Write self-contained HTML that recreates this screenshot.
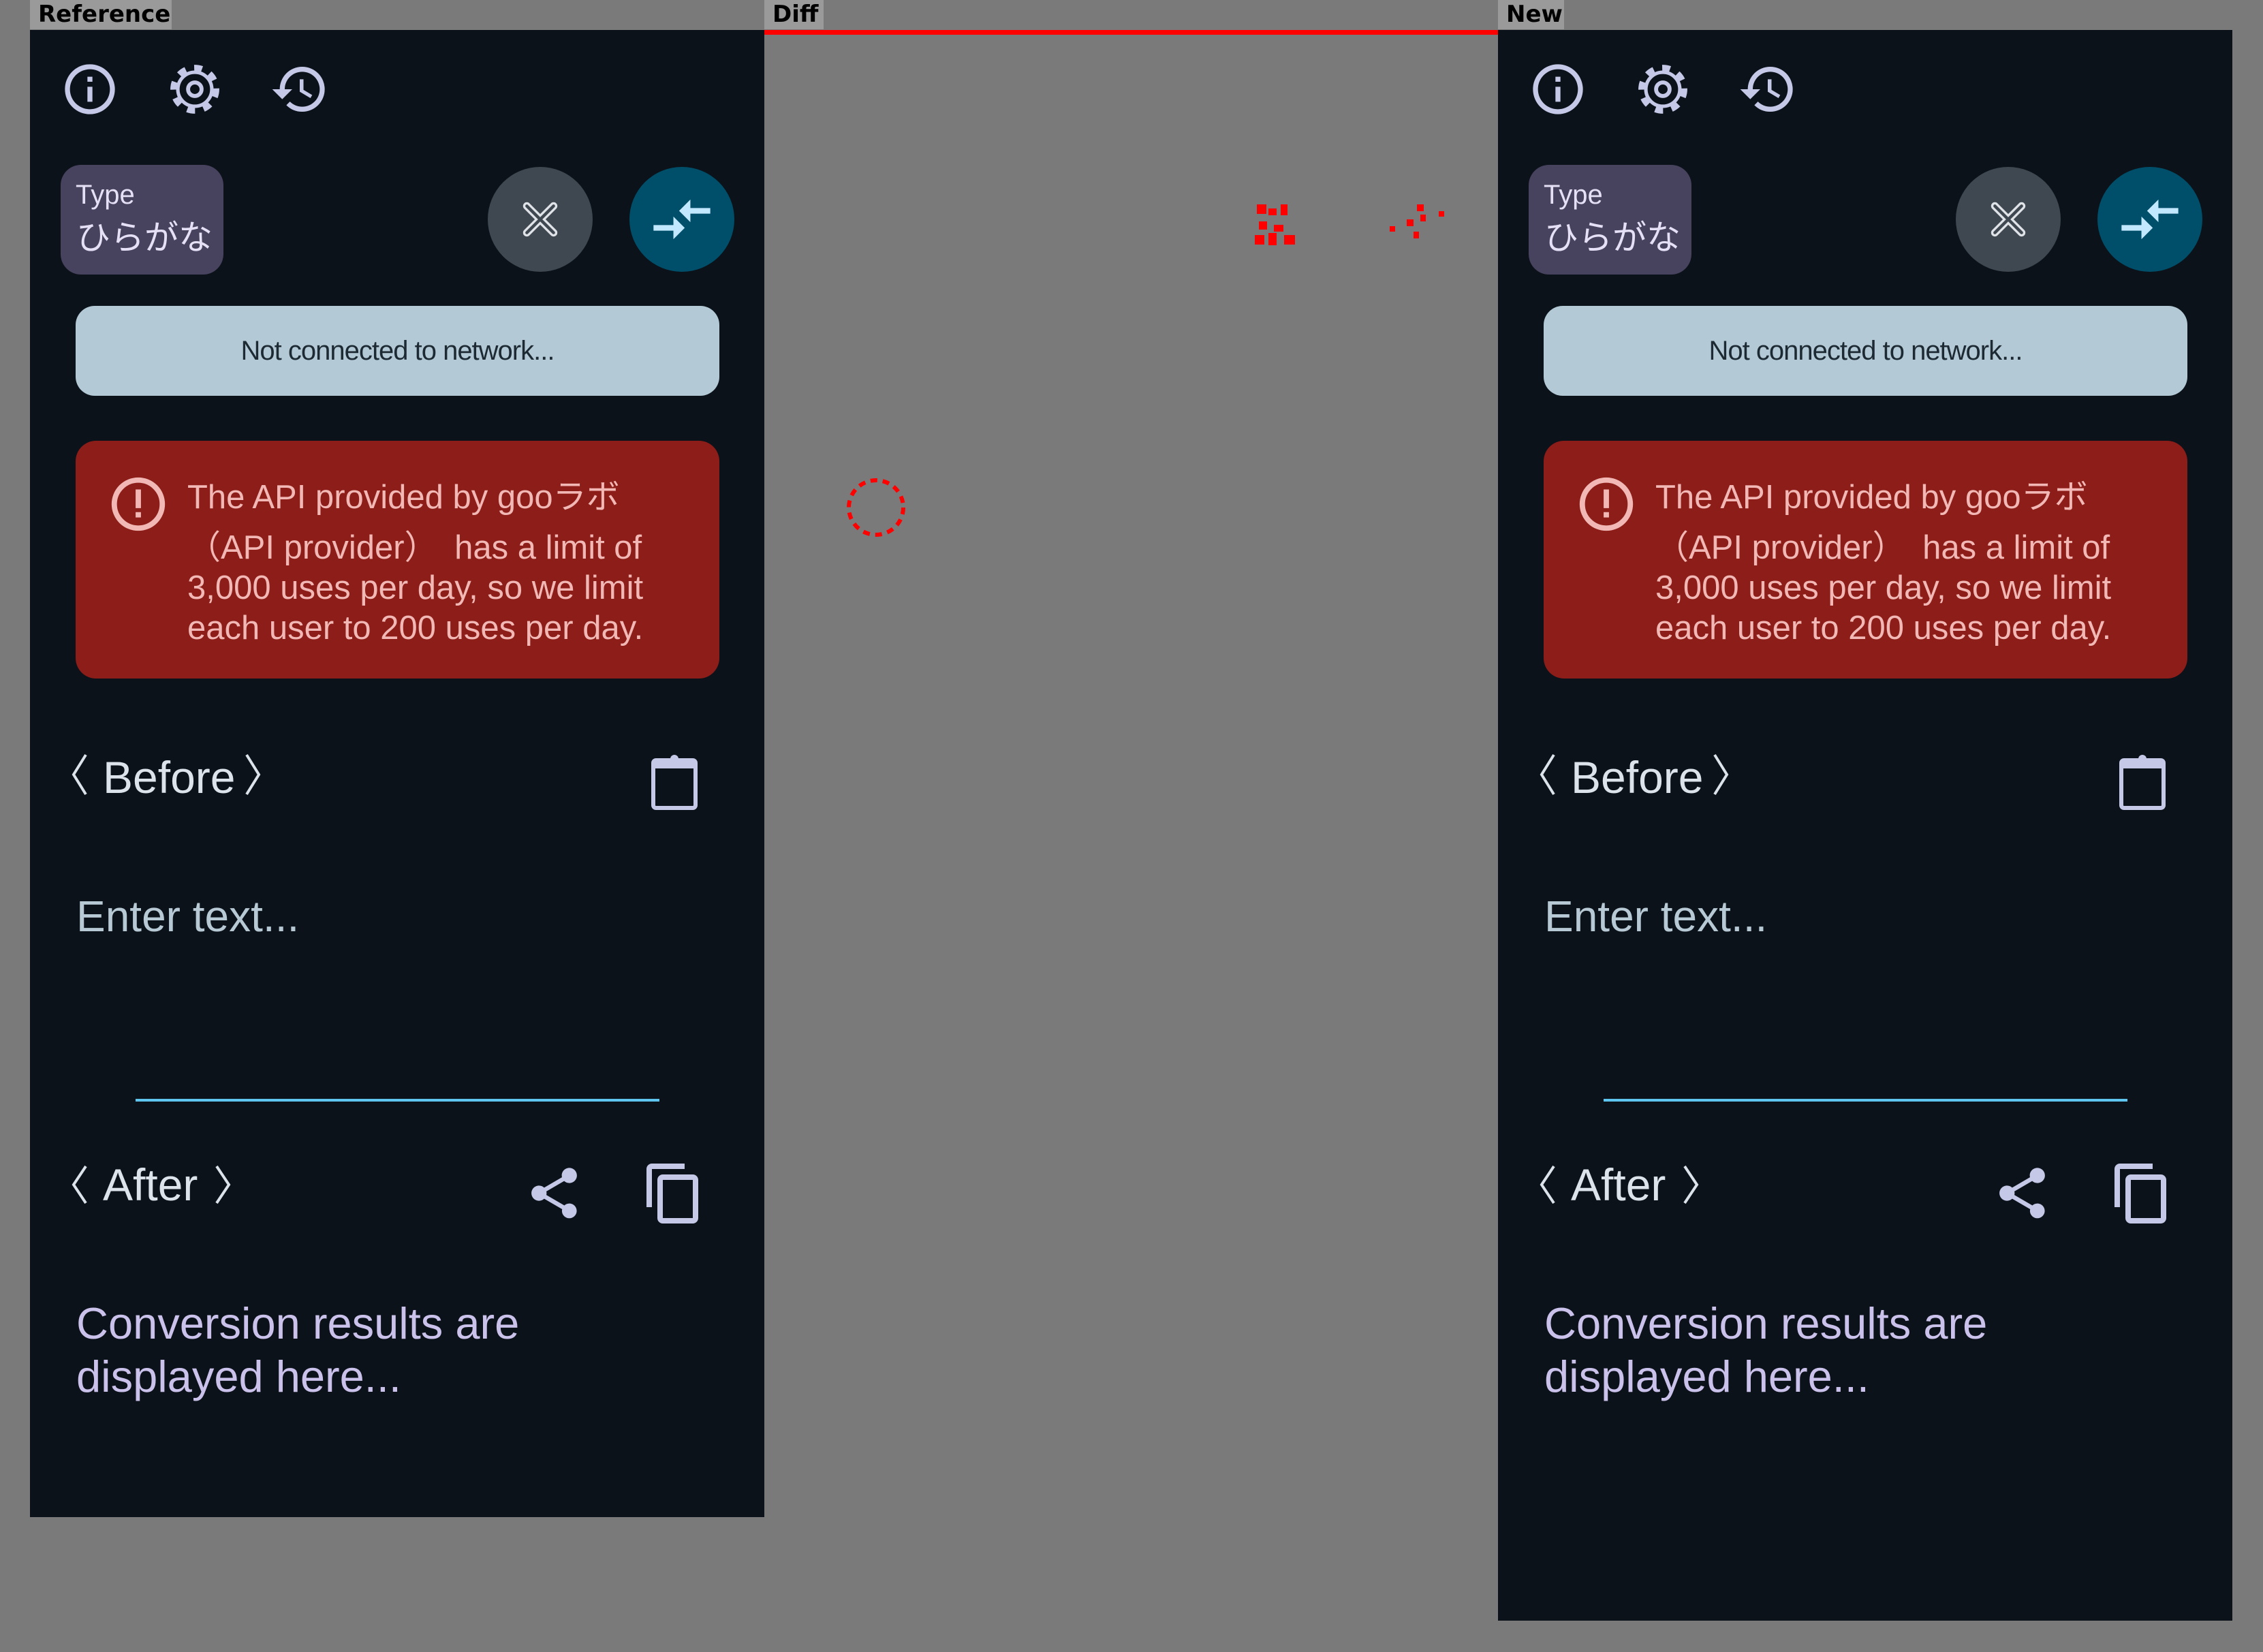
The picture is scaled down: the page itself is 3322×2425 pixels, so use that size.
<!DOCTYPE html>
<html><head><meta charset="utf-8"><style>
*{margin:0;padding:0;box-sizing:border-box}
body{width:3322px;height:2425px;background:#7a7a7a;position:relative;overflow:hidden;font-family:"Liberation Sans","Noto Sans CJK JP",sans-serif}
.lbl{position:absolute;top:0;height:43px;background:#9a9a9a;color:#000;font:bold 34px "DejaVu Sans","Liberation Sans",sans-serif;line-height:43px;padding:0 12px}
.p{position:absolute;top:44px;width:1078px;background:#0c121a;overflow:hidden}
.p>*{position:absolute}
.t{white-space:nowrap;line-height:1}
</style></head><body>
<div class="lbl" style="left:44px;width:208px">Reference</div>
<div class="lbl" style="left:1122px;width:87px">Diff</div>
<div class="lbl" style="left:2199px;width:97px">New</div>
<div style="position:absolute;left:1122px;top:44px;width:1077px;height:7px;background:#f00"></div>
<svg style="position:absolute;left:0;top:0" width="3322" height="2425">
<g fill="#f00"><rect x="1845" y="300" width="14" height="14"/><rect x="1862" y="306" width="12" height="10"/><rect x="1880" y="300" width="10" height="16"/><rect x="1848" y="325" width="12" height="12"/><rect x="1870" y="330" width="14" height="10"/><rect x="1842" y="345" width="14" height="14"/><rect x="1862" y="342" width="12" height="18"/><rect x="1885" y="345" width="16" height="14"/>
<rect x="2040" y="332" width="8" height="8"/><rect x="2065" y="322" width="10" height="10"/><rect x="2080" y="300" width="10" height="10"/><rect x="2085" y="315" width="8" height="10"/><rect x="2112" y="310" width="8" height="8"/><rect x="2075" y="340" width="8" height="10"/></g>
<circle cx="1286" cy="745" r="40" fill="none" stroke="#f00" stroke-width="6" stroke-dasharray="10 8"/>
</svg>

<div class="p" id="a" style="left:44px;height:2183px">
<svg style="left:44px;top:43px" width="88" height="88" viewBox="0 0 24 24"><path fill="#c5c8e6" d="M11 7h2v2h-2zm0 4h2v6h-2zm1-9C6.48 2 2 6.48 2 12s4.48 10 10 10 10-4.48 10-10S17.52 2 12 2zm0 18c-4.41 0-8-3.59-8-8s3.59-8 8-8 8 3.59 8 8-3.59 8-8 8z"/></svg>
<svg style="left:198px;top:43px" width="88" height="88" viewBox="0 0 24 24"><circle cx="12" cy="12" r="8.6" fill="none" stroke="#c5c8e6" stroke-width="2.4" stroke-dasharray="3.2 3.5"/><circle cx="12" cy="12" r="6.8" fill="none" stroke="#c5c8e6" stroke-width="1.4"/><circle cx="12" cy="12" r="2.7" fill="none" stroke="#c5c8e6" stroke-width="1.6"/></svg>
<svg style="left:352px;top:43px" width="88" height="88" viewBox="0 0 24 24"><path fill="#c5c8e6" d="M13 3a9 9 0 0 0-9 9H1l3.89 3.89.07.14L9 12H6c0-3.87 3.13-7 7-7s7 3.13 7 7-3.130 7-7 7c-1.93 0-3.68-.79-4.94-2.06l-1.42 1.42A8.954 8.954 0 0 0 13 21a9 9 0 0 0 0-18zm-1 5v5l4.28 2.54.72-1.21-3.5-2.08V8H12z"/></svg>
<div style="left:45px;top:198px;width:239px;height:161px;background:#47435f;border-radius:30px"></div>
<div class="t" style="left:67px;top:222px;font-size:40px;color:#e6e0f6">Type</div>
<div class="t" style="left:68px;top:276px;font-size:50px;color:#e6e0f6;font-family:'Noto Sans CJK JP',sans-serif">ひらがな</div>
<div style="left:672px;top:201px;width:154px;height:154px;border-radius:50%;background:#3f4850"></div>
<svg style="left:721px;top:250px" width="56" height="56" viewBox="0 0 20 20"><path d="M3 3L17 17M17 3L3 17" stroke="#dfe3e8" stroke-width="4" stroke-linecap="round"/><path d="M3 3L17 17M17 3L3 17" stroke="#3f4850" stroke-width="1.6" stroke-linecap="round"/></svg>
<div style="left:880px;top:201px;width:154px;height:154px;border-radius:50%;background:#004f6a"></div>
<svg style="left:907px;top:228px" width="100" height="100" viewBox="0 0 24 24"><path fill="#c2e8ff" d="M9.01 14H2v2h7.01v3L13 15l-3.99-4v3zm5.98-1v-3H22V8h-7.01V5L11 9l3.99 4z"/></svg>
<div style="left:67px;top:405px;width:945px;height:132px;background:#b3cad6;border-radius:28px"></div>
<div class="t" style="left:67px;width:945px;top:451px;font-size:40px;text-align:center;color:#1d2a33;letter-spacing:-1px">Not connected to network...</div>
<div style="left:67px;top:603px;width:945px;height:349px;background:#8c1d18;border-radius:30px"></div>
<svg style="left:112px;top:649px" width="94" height="94" viewBox="0 0 24 24"><circle cx="12" cy="12" r="9" fill="none" stroke="#f2b8b5" stroke-width="2"/><rect x="11" y="6.5" width="2" height="7" fill="#f2b8b5"/><rect x="11" y="15" width="2" height="2" fill="#f2b8b5"/></svg>
<div class="t" style="left:231px;top:662px;font-size:49px;color:#f2b8b5">The API provided by gooラボ</div>
<div class="t" style="left:231px;top:736px;font-size:49px;color:#f2b8b5">（API provider）　has a limit of</div>
<div class="t" style="left:231px;top:795px;font-size:49px;color:#f2b8b5">3,000 uses per day, so we limit</div>
<div class="t" style="left:231px;top:854px;font-size:49px;color:#f2b8b5">each user to 200 uses per day.</div>
<svg style="left:58px;top:1060px" width="300" height="66"><path d="M24 4L6 33L24 62" fill="none" stroke="#dde3ea" stroke-width="4"/><path d="M260 4L278 33L260 62" fill="none" stroke="#dde3ea" stroke-width="4"/></svg>
<div class="t" style="left:107px;top:1064px;font-size:66px;color:#dde3ea">Before</div>
<svg style="left:911px;top:1063px" width="70" height="82" viewBox="0 0 70 82"><rect x="4" y="9" width="62" height="70" rx="4" fill="none" stroke="#c5c8e6" stroke-width="6"/><rect x="4" y="9" width="62" height="12" fill="#c5c8e6"/><circle cx="35" cy="7" r="6" fill="#c5c8e6"/></svg>
<div class="t" style="left:68px;top:1269px;font-size:64px;color:#b7c9d4">Enter text...</div>
<div style="left:155px;top:1569px;width:769px;height:4px;background:#5ec6ee"></div>
<svg style="left:58px;top:1664px" width="300" height="66"><path d="M24 4L6 31L24 58" fill="none" stroke="#dde3ea" stroke-width="4"/><path d="M216 4L234 31L216 58" fill="none" stroke="#dde3ea" stroke-width="4"/></svg>
<div class="t" style="left:107px;top:1662px;font-size:66px;color:#dde3ea">After</div>
<svg style="left:725px;top:1663px" width="89" height="89" viewBox="0 0 24 24"><path fill="#c5c8e6" d="M18 16.08c-.76 0-1.44.3-1.96.77L8.91 12.7c.05-.23.09-.46.09-.7s-.04-.47-.09-.7l7.05-4.11c.54.5 1.25.81 2.04.81 1.66 0 3-1.34 3-3s-1.34-3-3-3-3 1.34-3 3c0 .24.04.47.09.7L8.04 9.81C7.5 9.31 6.79 9 6 9c-1.66 0-3 1.34-3 3s1.34 3 3 3c.79 0 1.5-.31 2.04-.81l7.12 4.16c-.05.21-.08.43-.08.65 0 1.61 1.31 2.92 2.92 2.92s2.92-1.31 2.92-2.92-1.31-2.92-2.92-2.92z"/></svg>
<svg style="left:897px;top:1660px" width="96" height="96" viewBox="0 0 24 24"><path fill="#c5c8e6" d="M16 1H4c-1.1 0-2 .9-2 2v14h2V3h12V1zm3 4H8c-1.1 0-2 .9-2 2v14c0 1.1.9 2 2 2h11c1.1 0 2-.9 2-2V7c0-1.1-.9-2-2-2zm0 16H8V7h11v14z"/></svg>
<div class="t" style="left:68px;top:1860px;font-size:65px;color:#cbc2ec;line-height:78px;white-space:normal;width:900px">Conversion results are<br>displayed here...</div>
</div>
<script>
var a=document.getElementById('a');var c=a.cloneNode(true);c.id='c';c.style.left='2199px';c.style.height='2335px';document.body.appendChild(c);
</script>
</body></html>
